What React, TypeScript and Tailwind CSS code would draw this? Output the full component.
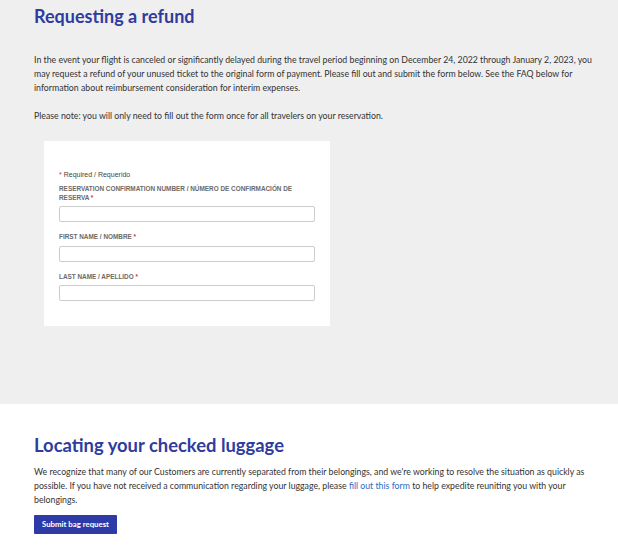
import React from 'react';

const RefundPage: React.FC = () => {
  const fields = [
    { label: 'RESERVATION CONFIRMATION NUMBER / NÚMERO DE CONFIRMACIÓN DE RESERVA', first: true },
    { label: 'FIRST NAME / NOMBRE' },
    { label: 'LAST NAME / APELLIDO' },
  ];

  return (
    <div className="w-[618px] min-h-[546px] bg-white font-['Lato',sans-serif] text-[#333]">
      {/* Requesting a refund */}
      <section className="bg-[#efefef] pl-[34px] pr-[22px] pt-[4px] pb-[78px]">
        <h1 className="text-[18px] font-bold leading-[24px] text-[#2f3c9e]">Requesting a refund</h1>
        <p className="mt-[25px] text-[8.75px] leading-[14px]">
          In the event your flight is canceled or significantly delayed during the travel period beginning on December
          24, 2022 through January 2, 2023, you may request a refund of your unused ticket to the original form of
          payment. Please fill out and submit the form below. See the FAQ below for information about reimbursement
          consideration for interim expenses.
        </p>
        <p className="mt-[14px] text-[8.75px] leading-[14px]">
          Please note: you will only need to fill out the form once for all travelers on your reservation.
        </p>

        {/* Form */}
        <div className="ml-[10px] mt-[18px] w-[286px] bg-white px-[15px] pt-[29px] pb-[25px] font-['Liberation_Sans',Arial,sans-serif]">
          <p className="text-[7px] leading-[10px] text-[#444]">
            <span className="text-[#d33]">*</span> Required / Requerido
          </p>
          {fields.map((f, i) => (
            <div key={i} className={f.first ? 'mt-[5px]' : 'mt-[11px]'}>
              <label className="block text-[6.4px] font-bold leading-[8.5px] text-[#6a6a6a]">
                {f.label} <span className="text-[#d33]">*</span>
              </label>
              <input
                type="text"
                className="mt-[4px] block h-[16px] w-full rounded-[2px] border border-[#ccc] bg-white"
              />
            </div>
          ))}
        </div>
      </section>

      {/* Locating your checked luggage */}
      <section className="pl-[34px] pr-[22px] pt-[29px] pb-[12px]">
        <h2 className="text-[18.4px] font-bold leading-[24px] text-[#2f3c9e]">Locating your checked luggage</h2>
        <p className="mt-[8px] text-[8.75px] leading-[14px]">
          We recognize that many of our Customers are currently separated from their belongings, and we're working to
          resolve the situation as quickly as possible. If you have not received a communication regarding your
          luggage, please{' '}
          <a href="#" className="text-[#2a6bc4]">
            fill out this form
          </a>{' '}
          to help expedite reuniting you with your belongings.
        </p>
        <button className="mt-[8px] h-[19px] rounded-[1px] bg-[#2d3aa8] px-[8px] text-[7.8px] font-bold text-white">
          Submit bag request
        </button>
      </section>
    </div>
  );
};

export default RefundPage;
